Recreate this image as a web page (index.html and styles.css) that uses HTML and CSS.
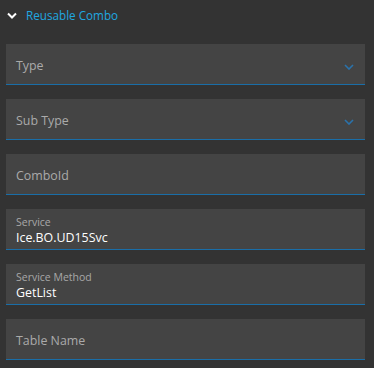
FILE: index.html
```html
<!DOCTYPE html>
<html lang="en">
<head>
    <meta charset="UTF-8">
    <title>Reusable Combo</title>
    <link rel="stylesheet" href="styles.css">
</head>
<body>
    <div class="section-header">
        <svg class="header-chevron" width="10" height="7" viewBox="0 0 10 7"><path d="M1 1.5 L5 5.5 L9 1.5" fill="none" stroke="#ffffff" stroke-width="2"/></svg>
        <span class="section-title">Reusable Combo</span>
    </div>

    <div class="fields">
        <div class="field">
            <span class="placeholder">Type</span>
            <svg class="field-chevron" width="10" height="6" viewBox="0 0 10 6"><path d="M1 1 L5 5 L9 1" fill="none" stroke="#2a72ab" stroke-width="1.6"/></svg>
        </div>
        <div class="field">
            <span class="placeholder">Sub Type</span>
            <svg class="field-chevron" width="10" height="6" viewBox="0 0 10 6"><path d="M1 1 L5 5 L9 1" fill="none" stroke="#2a72ab" stroke-width="1.6"/></svg>
        </div>
        <div class="field">
            <span class="placeholder">ComboId</span>
        </div>
        <div class="field filled">
            <span class="label">Service</span>
            <span class="value">Ice.BO.UD15Svc</span>
        </div>
        <div class="field filled">
            <span class="label">Service Method</span>
            <span class="value">GetList</span>
        </div>
        <div class="field">
            <span class="placeholder">Table Name</span>
        </div>
    </div>
</body>
</html>
```

FILE: styles.css
```css
body {
    margin: 0;
    background-color: #333333;
    font-family: "Open Sans", sans-serif;
    color: white;
}
.section-header {
    display: flex;
    align-items: center;
    height: 30px;
    padding-left: 7px;
}
.header-chevron {
    margin-right: 9px;
}
.section-title {
    color: #1fa8e0;
    font-size: 11.7px;
}
.fields {
    padding: 14px 9px 0 6px;
}
.field {
    display: flex;
    flex-direction: column;
    justify-content: center;
    position: relative;
    height: 40px;
    margin-bottom: 14px;
    padding: 0 10px;
    background-color: #444444;
    border-bottom: 1px solid #1a6ea8;
}
.placeholder {
    color: #aaaaaa;
    font-size: 12.4px;
    padding-top: 3px;
}
.label {
    color: #a8a8a8;
    font-size: 10.5px;
    line-height: 14px;
    padding-top: 2px;
}
.value {
    color: #ffffff;
    font-size: 12.4px;
    line-height: 17px;
}
.field-chevron {
    position: absolute;
    right: 11px;
    top: 20px;
}
```
